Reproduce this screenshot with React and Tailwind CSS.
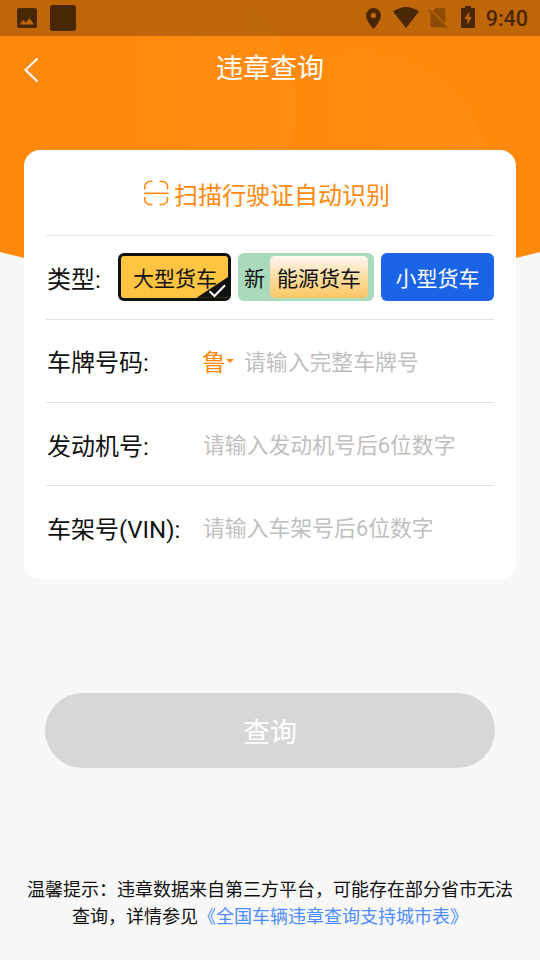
const labelClass = "text-[24px] leading-none text-[#111]";
const hintClass = "text-[21.85px] leading-none text-[#bfbfbf]";

function StatusBar() {
  return (
    <div className="flex h-9 items-center bg-black/25 pr-3 pl-[17px] text-[#492604]">
      <svg width="20" height="20" viewBox="0 0 20 20" className="block">
        <path fillRule="evenodd" fill="currentColor" d="M2 0h16a2 2 0 0 1 2 2v16a2 2 0 0 1-2 2H2a2 2 0 0 1-2-2V2A2 2 0 0 1 2 0zM2.5 16.5h14.5l-4.6-6.2-3.6 4.5-2.5-2.9z" />
      </svg>
      <div className="ml-[13px] h-[26px] w-[26px] rounded-[3px] bg-[#492604]" />
      <div className="flex-1" />
      <svg width="15" height="21" viewBox="0 0 15 21" className="mt-px mr-[12px]">
        <path fillRule="evenodd" fill="currentColor" d="M7.5 0A7.4 7.4 0 0 0 .1 7.4C.1 13 7.5 21 7.5 21s7.4-8 7.4-13.6A7.4 7.4 0 0 0 7.5 0zm0 4.8a2.6 2.6 0 1 1 0 5.2 2.6 2.6 0 0 1 0-5.2z" />
      </svg>
      <svg width="26" height="21" viewBox="0 0 26 21" className="mr-[9px] -mt-[1px]">
        <path fill="currentColor" d="M0 4.5Q13-4.5 26 4.5L13 21z" />
      </svg>
      <svg width="20" height="21" viewBox="0 0 20 21" className="mr-[13px]">
        <g opacity=".42" fill="currentColor">
          <path d="M7.5 0h8a1.8 1.8 0 0 1 1.8 1.8v13.7L5 3z" />
          <path d="M2.4 3.5L17.8 19.2H4.2a1.8 1.8 0 0 1-1.8-1.8z" />
          <path d="M1.3.9L19.4 19.4l-1.2 1.2L.1 2.1z" />
        </g>
      </svg>
      <svg width="14" height="22" viewBox="0 0 14 22" className="mr-[11px] -mt-[2px]">
        <path fillRule="evenodd" fill="currentColor" d="M4 0h6v2h3a1 1 0 0 1 1 1v18a1 1 0 0 1-1 1H1a1 1 0 0 1-1-1V3a1 1 0 0 1 1-1h3zM8.5 5.5L3.2 13h3.2v6L10.8 11H8z" />
      </svg>
      <span className="pt-[2px] text-[21.5px] leading-none font-medium">9:40</span>
    </div>
  );
}

function HeaderArt() {
  return (
    <svg width="540" height="300" viewBox="0 0 540 300" className="absolute top-0 left-0">
      <defs>
        <linearGradient id="glow">
          <stop offset=".3" stopColor="#fff" stopOpacity="0" />
          <stop offset="1" stopColor="#fff" stopOpacity=".03" />
        </linearGradient>
      </defs>
      <path d="M0 0H540V252Q270 322 0 252z" fill="#ff890c" />
      <circle cx="163" cy="108" r="133" fill="url(#glow)" />
      <circle cx="354" cy="191" r="139" fill="url(#glow)" />
    </svg>
  );
}

function Field({ label, children, className }) {
  return (
    <div className={"flex items-center border-t border-[#e2e2e2] " + className}>
      <span className={"w-[156px] shrink-0 pt-[4px] pl-px whitespace-nowrap " + labelClass}>{label}</span>
      {children}
    </div>
  );
}

export default function App() {
  return (
    <div className="relative h-[960px] w-[540px] overflow-hidden bg-[#f8f8f8] font-[Roboto,'Noto_Sans_CJK_SC',sans-serif]">
      <HeaderArt />
      <div className="relative flex h-full flex-col">
        <StatusBar />
        <header className="grid h-[114px] grid-cols-[60px_1fr_60px] items-start text-white">
          <svg width="16" height="26" viewBox="0 0 16 26" className="mt-[21px] ml-[23px]" fill="none" stroke="currentColor" strokeWidth="2">
            <path d="M14.5 1.5L2.5 13l12 11.5" />
          </svg>
          <h1 className="mt-[20px] text-center text-[27px] leading-none">违章查询</h1>
        </header>

        <main className="mx-6 h-[429px] rounded-[16px] bg-white px-[22px]">
          <button className="flex h-[85px] w-full items-center gap-[5px] pl-[97px] text-[#ff890c]">
            <svg width="26" height="26" viewBox="0 0 26 26" fill="none" stroke="currentColor" strokeWidth="1.6">
              <path d="M1.8 9.5V6.5a5 5 0 0 1 5-5H9.5M16.5 1.5h3a5 5 0 0 1 5 5V9.5M24.5 17v2.5a5 5 0 0 1-5 5H16.5M9.5 24.5H6.8a5 5 0 0 1-5-5V17" />
              <path d="M1 13.3h24.5" />
            </svg>
            <span className="pt-[7px] text-[24px] leading-none">扫描行驶证自动识别</span>
          </button>

          <div className="flex h-[84px] items-center border-t border-[#ececec] pb-px">
            <span className={"w-[72px] shrink-0 pt-[5px] pl-px " + labelClass}>类型:</span>
            <div className="flex gap-[7px] text-[21px] leading-none text-[#111]">
              <div className="relative flex h-12 w-[113px] items-center justify-center overflow-hidden rounded-[6px] border-[3px] border-[#111] bg-[#ffc441] pt-[4px] pl-px">
                大型货车
                <svg width="34" height="26" viewBox="0 0 34 26" className="absolute -right-[3px] -bottom-[3px]">
                  <path d="M34 0V26H0V22.5z" fill="#111" />
                  <path d="M12.5 16.2l5 4.8L28 10.3" fill="none" stroke="#fff" strokeWidth="2" />
                  <path d="M1 23.2h28" stroke="#9b762b" strokeWidth=".8" />
                </svg>
              </div>
              <div className="flex h-12 w-[136px] items-center rounded-[6px] bg-[#abd9bc] pl-[6px]">
                <span className="w-[26px] pt-[4px]">新</span>
                <span className="flex h-[42px] w-[98px] items-center justify-center rounded-[5px] bg-linear-to-b from-[#fef8f0] via-[#fbdda3] to-[#fdc762] pt-[4px]">能源货车</span>
              </div>
              <div className="flex h-12 w-[113px] items-center justify-center rounded-[6px] bg-[#1b64e7] pt-[4px] text-white">小型货车</div>
            </div>
          </div>

          <Field label="车牌号码:" className="h-[83px]">
            <span className="pt-[3px] text-[24px] leading-none text-[#ff890c]">鲁</span>
            <svg width="8" height="5" viewBox="0 0 8 5" className="text-[#ff890c]">
              <path d="M0 0h8L4 4z" fill="currentColor" />
            </svg>
            <span className={"ml-[10px] pt-[3px] " + hintClass}>请输入完整车牌号</span>
          </Field>
          <Field label="发动机号:" className="h-[83px] *:first:pt-[6px]">
            <span className={"pt-[3px] pl-px " + hintClass}>请输入发动机号后6位数字</span>
          </Field>
          <Field label="车架号(VIN):" className="h-[84px]">
            <span className={"pt-[2px] pl-px " + hintClass}>请输入车架号后6位数字</span>
          </Field>
        </main>

        <button className="mx-[45px] mt-[114px] flex h-[75px] items-center justify-center rounded-full bg-[#d7d7d7] pt-[5px] text-[27px] leading-none text-white">
          查询
        </button>

        <p className="mt-[108px] text-center text-[18px] leading-[27px] text-[#111]">
          温馨提示：违章数据来自第三方平台，可能存在部分省市无法
          <br />
          查询，详情参见<span className="text-[#4d8cff]">《全国车辆违章查询支持城市表》</span>
        </p>
      </div>
    </div>
  );
}
